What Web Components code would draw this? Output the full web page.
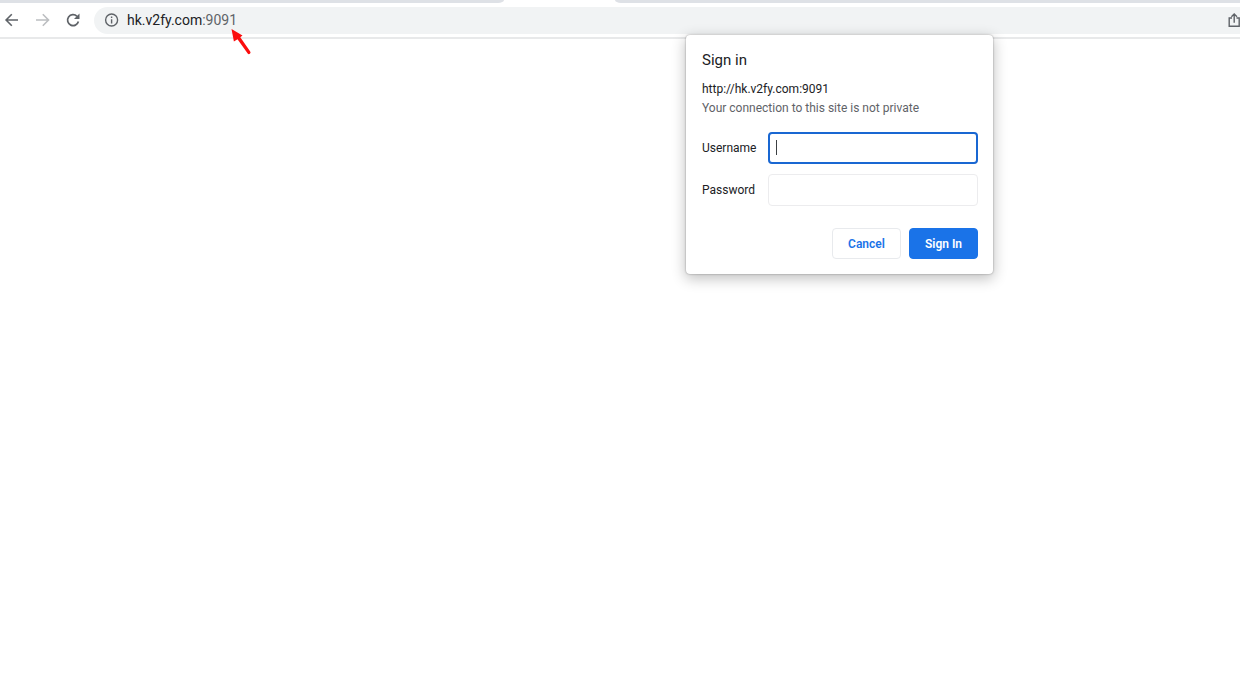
<!DOCTYPE html>
<html lang="en">
<head>
<meta charset="utf-8">
<title>hk.v2fy.com:9091</title>
<style>
html, body { margin: 0; height: 100%; background: #fff; }
body { font-family: Roboto, "Liberation Sans", sans-serif; color: #202124; overflow: hidden; }
</style>
</head>
<body>
<browser-window>
  <tab-strip slot="tabs"></tab-strip>
  <nav-toolbar slot="toolbar" host="hk.v2fy.com" port=":9091"></nav-toolbar>
  <sign-in-dialog slot="dialog">
    <span slot="title">Sign in</span>
    <span slot="origin">http://hk.v2fy.com:9091</span>
    <span slot="note">Your connection to this site is not private</span>
    <form-field slot="fields" label="Username" type="text" active></form-field>
    <form-field slot="fields" label="Password" type="password"></form-field>
    <dialog-button slot="actions">Cancel</dialog-button>
    <dialog-button slot="actions" primary>Sign In</dialog-button>
  </sign-in-dialog>
</browser-window>
<script>
class BaseElement extends HTMLElement {
  connectedCallback() {
    if (this.shadowRoot) return;
    this.attachShadow({ mode: "open" }).innerHTML = this.render();
  }
}

customElements.define("browser-window", class extends BaseElement {
  render() {
    return `<style>
      :host { display: flex; flex-direction: column; min-height: 100%; position: relative; }
      main { flex: 1; }
      ::slotted(sign-in-dialog) { position: absolute; top: 35px; right: 247px; }
    </style>
    <slot name="tabs"></slot><slot name="toolbar"></slot><main></main><slot name="dialog"></slot>`;
  }
});

customElements.define("tab-strip", class extends BaseElement {
  render() {
    return `<style>
      :host { display: flex; height: 3px; justify-content: space-between; background: #fff; }
      i { background: #dee1e6; }
      .before { width: 504px; border-bottom-right-radius: 6px 3px; }
      .gap { width: 111px; background: #fff; }
      .after { flex: 1; border-bottom-left-radius: 6px 3px; }
    </style><i class="before"></i><i class="gap"></i><i class="after"></i>`;
  }
});

customElements.define("nav-toolbar", class extends BaseElement {
  render() {
    return `<style>
      :host { display: flex; align-items: center; height: 34px; background: #fff; border-bottom: 2px solid #e8e9ea; }
      button { border: 0; padding: 0; background: none; display: flex; color: #5f6368; }
      nav { display: flex; gap: 15px; padding: 0 13px 0 3px; }
      button:disabled { color: #bcbec1; }
      .omnibox { flex: 1; min-width: 0; display: flex; align-items: center; height: 27px; background: #f1f3f4; border-radius: 14px 0 0 14px; padding-left: 10px; color: #5f6368; }
      .address { position: relative; flex: 1; margin-left: 7px; font-size: 14px; line-height: 20px; white-space: nowrap; }
      .address a { color: #5f6368; text-decoration: none; }
      b { font-weight: 400; color: #202124; }
      .pointer { position: absolute; left: 104px; top: 18px; }
      svg { display: block; flex: none; }
    </style>
    <nav>
      <button aria-label="Back"><svg width="16" height="16" viewBox="0 0 16 16" fill="none" stroke="currentColor" stroke-width="1.6"><path d="M15 8H3.500M8.800 2.300 3.100 8 8.800 13.700"/></svg></button>
      <button aria-label="Forward" disabled><svg width="16" height="16" viewBox="0 0 16 16" fill="none" stroke="currentColor" stroke-width="1.6"><path d="M2 8h12M8.800 2.300 14.500 8 8.800 13.700"/></svg></button>
      <button aria-label="Reload"><svg width="16" height="16" viewBox="0 0 16 16"><path d="M13.400 9.500A5.500 5.500 0 1 1 12 4.300" fill="none" stroke="currentColor" stroke-width="1.7"/><path d="M14.500 1.500v5.500H9z" fill="currentColor"/></svg></button>
    </nav>
    <div class="omnibox">
      <button aria-label="Site information"><svg width="16" height="16" viewBox="0 0 16 16"><circle cx="7.600" cy="8" r="6" fill="none" stroke="currentColor" stroke-width="1.400"/><path d="M6.900 7.200h1.400v4.200H6.900zM6.900 4.600h1.400V6H6.900z" fill="currentColor"/></svg></button>
      <div class="address"><a href="#"><b>${this.getAttribute("host")}</b>${this.getAttribute("port")}</a>
        <svg class="pointer" width="21" height="28" viewBox="0 0 21 28"><path d="M.5 1 11.500 7.500 9.300 9.200 19.200 23.600A1.500 1.500 0 0 1 16.700 25.400L6.500 11.200 2.900 13.600Z" fill="#fb0d0d"/></svg>
      </div>
      <button aria-label="Share"><svg width="13" height="16" viewBox="0 0 13 16" fill="none" stroke="currentColor" stroke-width="1.400"><path d="M5 6H2.200v8.300h10V6H9.500M7.200 10.800V2.200M4.400 4.700 7.200 1.900 10 4.700"/></svg></button>
    </div>`;
  }
});

customElements.define("sign-in-dialog", class extends BaseElement {
  render() {
    return `<style>
      :host { display: block; width: 307px; box-sizing: border-box; padding: 15px 15px 15px 16px; background: #fff; border-radius: 4px; box-shadow: 0 0 2px rgba(0,0,0,.4), 0 4px 14px 1px rgba(0,0,0,.24); }
      h1, p { margin: 0; font-weight: 400; }
      h1 { font-size: 15px; line-height: 20px; margin-bottom: 10px; }
      p { font-size: 12px; line-height: 19px; }
      .note { color: #5f6368; }
      .fields { display: grid; gap: 10px; margin-top: 14px; }
      .actions { display: flex; justify-content: flex-end; gap: 8px; margin-top: 22px; }
    </style>
    <form role="dialog" aria-label="Sign in">
      <h1><slot name="title"></slot></h1>
      <p><slot name="origin"></slot></p>
      <p class="note"><slot name="note"></slot></p>
      <div class="fields"><slot name="fields"></slot></div>
      <div class="actions"><slot name="actions"></slot></div>
    </form>`;
  }
});

customElements.define("form-field", class extends BaseElement {
  render() {
    return `<style>
      :host { display: flex; align-items: center; height: 32px; font-size: 12px; }
      label { width: 66px; flex: none; line-height: 16px; }
      .box { flex: 1; position: relative; display: flex; }
      input { width: 100%; height: 32px; box-sizing: border-box; border: 1px solid #ececee; border-radius: 4px; padding: 0 8px; font: inherit; color: inherit; background: #fff; outline: 0; }
      :host([active]) input { border: 2px solid #1967d2; }
      .caret { display: none; }
      :host([active]) .caret { display: block; position: absolute; left: 8px; top: 8px; width: 1px; height: 15px; background: #3c4043; }
    </style>
    <label for="input">${this.getAttribute("label")}</label>
    <div class="box"><input id="input" type="${this.getAttribute("type")}"><span class="caret"></span></div>`;
  }
});

customElements.define("dialog-button", class extends BaseElement {
  render() {
    return `<style>
      :host { display: block; }
      button { display: block; width: 69px; height: 31px; padding: 0; box-sizing: border-box; border: 1px solid #e8eaed; border-radius: 4px; background: #fff; color: #1a73e8; font: 600 12px Roboto, "Liberation Sans", sans-serif; }
      :host([primary]) button { background: #1a73e8; border-color: #1a73e8; color: #fff; }
    </style><button type="button"><slot></slot></button>`;
  }
});
</script>
</body>
</html>
